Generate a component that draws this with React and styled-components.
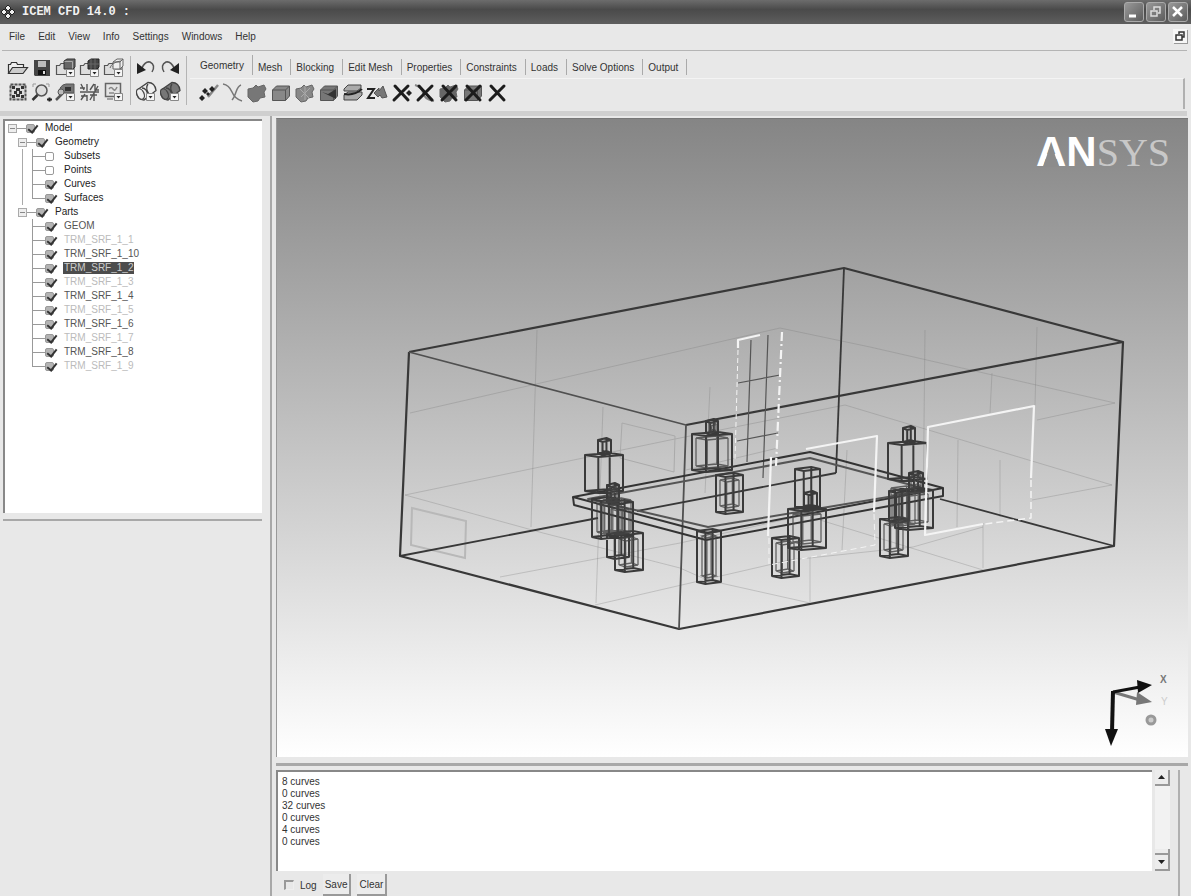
import { useState } from "react";
import styled, { createGlobalStyle } from "styled-components";

const GlobalStyle = createGlobalStyle`
  * {
    box-sizing: border-box;
  }
  body {
    margin: 0;
    background: #e8e8e8;
    color: #333;
    font-family: "Liberation Sans", Arial, sans-serif;
    font-size: 10px;
  }
  button, textarea {
    font: inherit;
    color: inherit;
  }
`;

const Window = styled.div`
  display: flex;
  flex-direction: column;
  height: 100vh;
  overflow: hidden;
`;

const TitleBar = styled.header`
  display: flex;
  align-items: center;
  gap: 7px;
  height: 24px;
  padding: 0 3px 0 1px;
  background: linear-gradient(#6c6c6c, #4a4a4a 40%, #5e5e5e);
`;

const Title = styled.h1`
  flex: 1;
  margin: 0;
  color: #f2f2f2;
  font-family: "Liberation Mono", monospace;
  font-size: 12px;
  font-weight: bold;
`;

const WindowButtons = styled.div`
  display: flex;
  gap: 2px;
`;

const WindowButton = styled.button`
  display: flex;
  width: 20px;
  height: 20px;
  padding: 0;
  border: 1px solid #aaa;
  border-radius: 3px;
  background: linear-gradient(135deg, #999, #5c5c5c);
`;

const MenuBar = styled.nav`
  display: flex;
  align-items: center;
  gap: 13px;
  height: 27px;
  margin: 0 4px 0 2px;
  padding: 0 0 2px 7px;
  border-bottom: 1px solid #b4b4b4;
`;

const MenuItem = styled.button`
  padding: 0;
  border: 0;
  background: none;
`;

const RestoreButton = styled.button`
  display: flex;
  width: 14px;
  height: 14px;
  margin-left: auto;
  padding: 0;
  border: 0;
  background: #f6f6f6;
  box-shadow: 1px 1px 0 #999;
`;

const ToolBar = styled.section`
  display: flex;
  height: 65px;
  margin-right: 4px;
  padding: 5px 2px 0 6px;
  border-bottom: 5px solid #cfcfcf;
`;

const ToolGroup = styled.div`
  display: grid;
  grid-template-columns: repeat(${(props) => props.$columns}, 24px);
  grid-auto-rows: 24px;
  height: 49px;
  padding-right: ${(props) => props.$gapAfter}px;
  margin-right: 3px;
  border-right: 1px solid #b4b4b4;
`;

const ToolButton = styled.button`
  display: flex;
  width: 24px;
  height: 24px;
  padding: 0;
  border: 0;
  background: none;
`;

const Ribbon = styled.div`
  flex: 1;
  display: flex;
  flex-direction: column;
`;

const TabList = styled.div`
  display: flex;
  align-items: flex-end;
  height: 22px;
  padding: 0 0 3px 5px;
`;

const Tab = styled.button`
  height: ${(props) => (props.$active ? 20 : 16)}px;
  padding: 0 8px 0 5px;
  border: 0;
  border-right: 1px solid #aaa;
  background: none;
  text-align: left;
  white-space: nowrap;
`;

const TabPanel = styled.div`
  display: flex;
  height: 31px;
  padding: 2px 0 0 7px;
  border-top: 1px solid #f4f4f4;
  border-right: 2px solid #b0b0b0;
`;

const Workspace = styled.main`
  flex: 1;
  display: flex;
  min-height: 0;
`;

const Sidebar = styled.aside`
  flex: 0 0 264px;
  display: flex;
  flex-direction: column;
  padding: 3px 2px 0 3px;
`;

const TreePane = styled.div`
  flex: 21;
  padding-bottom: 6px;
  border-bottom: 2px solid #a8a8a8;
`;

const DisplayPane = styled.div`
  flex: 20;
`;

const Tree = styled.ul`
  height: 100%;
  margin: 0;
  padding: 0 0 0 3px;
  border-top: 2px solid #888;
  border-left: 2px solid #888;
  background: #fff;
  list-style: none;
`;

const Branches = styled.ul`
  margin: 0;
  padding: 0 0 0 ${(props) => props.$indent}px;
  list-style: none;
  background: ${(props) =>
    props.$piped
      ? "linear-gradient(#aaa, #aaa) 4px 0 / 1px 100% no-repeat"
      : "none"};
`;

const Row = styled.div`
  display: flex;
  align-items: center;
  height: 14px;
`;

const Expander = styled.button`
  display: flex;
  width: 9px;
  height: 9px;
  padding: 0;
  border: 1px solid #aaa;
  background: #eee;

  &::before {
    content: "";
    width: 5px;
    height: 1px;
    margin: auto;
    background: #888;
  }
`;

const Link = styled.span`
  width: ${(props) => (props.$leaf ? 13 : 9)}px;
  height: 14px;
  background:
    linear-gradient(#999, #999) 0 0 / 1px
      ${(props) => (props.$leaf ? (props.$last ? "50%" : "100%") : "0")}
      no-repeat,
    linear-gradient(#999, #999) 0 50% / 100% 1px no-repeat;
`;

const Check = styled.input`
  appearance: none;
  width: 9px;
  height: 9px;
  margin: 0;
  border: 1px solid #999;
  border-radius: 2px;
  background: #fff;

  &:checked {
    background: #b4b4b4;
  }

  &:checked::before {
    content: "";
    display: block;
    width: 4px;
    height: 8px;
    margin: -2px 0 0 3px;
    border-right: 2px solid #333;
    border-bottom: 2px solid #333;
    transform: rotate(38deg);
  }
`;

const Label = styled.label`
  height: 12px;
  margin-left: 9px;
  padding: 0 1px;
  line-height: 12px;
  color: ${(props) => props.$color};
  background: ${(props) => (props.$selected ? "#4c4c4c" : "none")};
`;

const Splitter = styled.div`
  flex: 0 0 8px;
  margin-right: 4px;
  border-right: 2px solid #a8a8a8;
`;

const Main = styled.div`
  flex: 1;
  display: flex;
  flex-direction: column;
  min-width: 0;
  padding: 2px 3px 0 0;
`;

const Viewport = styled.section`
  flex: 1;
  min-height: 0;
  border-top: 1px solid #777;
  border-left: 1px solid #999;
  background: linear-gradient(#858585, #fff);
`;

const Scene = styled.svg`
  display: block;
  width: 100%;
  height: 100%;
`;

const Messages = styled.section`
  display: flex;
  flex-direction: column;
  margin-top: 6px;
  padding-top: 4px;
  border-top: 3px solid #a8a8a8;
  background: #e8e8e8;
`;

const Output = styled.div`
  display: flex;
  gap: 3px;
  padding-right: 8px;
`;

const Log = styled.textarea`
  flex: 1;
  height: 101px;
  padding: 4px;
  border: 0;
  border-top: 2px solid #888;
  border-left: 2px solid #888;
  outline: 0;
  background: #fff;
  line-height: 12px;
  resize: none;
  overflow: hidden;
`;

const ScrollBar = styled.div`
  display: flex;
  flex-direction: column;
  justify-content: space-between;
  width: 15px;
  background: #f2f2f2;
`;

const ScrollButton = styled.button`
  display: flex;
  width: 15px;
  height: ${(props) => (props.$thumb ? 22 : 16)}px;
  padding: 0;
  border: 0;
  border-right: 2px solid #999;
  border-bottom: 2px solid #999;
  background: ${(props) =>
    props.$thumb
      ? "linear-gradient(#999, #999) 0 4px / 100% 2px no-repeat #ececec"
      : "#ececec"};
`;

const LogBar = styled.div`
  display: flex;
  align-items: center;
  gap: 6px;
  height: 25px;
  padding: 3px 0 0 8px;
`;

const LogCheck = styled.input`
  appearance: none;
  width: 10px;
  height: 10px;
  margin: 0;
  border: 1px solid #eee;
  border-top: 2px solid #999;
  border-left: 2px solid #999;
`;

const LogButton = styled.button`
  height: 22px;
  padding: 0 2px;
  border: 0;
  border-right: 2px solid #999;
  border-bottom: 2px solid #999;
  background: #ececec;
`;

const MessagePanel = styled.div`
  border-right: 2px solid #b0b0b0;
  margin-right: 8px;
`;

const Drop = () => (
  <g>
    <path d="M12.500 13.500h8v7h-8z" fill="#f6f6f6" stroke="#888" />
    <path d="M14.500 16h4l-2 2.500z" fill="#222" />
  </g>
);

const Cube = ({ fill = "#888" }) => (
  <g stroke="#555" strokeLinejoin="round">
    <path d="M3.500 9l4-4h13v10l-4 4.500h-13z" fill={fill} />
    <path d="M3.500 9h13l4-4M16.500 9v10.500" fill="none" />
  </g>
);

const FolderBack = () => (
  <path
    d="M2.500 18.500v-9h3l1.500-2h4v3h9v8z"
    fill="#ddd"
    stroke="#555"
    strokeWidth="1.200"
  />
);

const Cross = () => (
  <g stroke="#1c1c1c" strokeWidth="3" strokeLinecap="round">
    <path d="M6 5l13 14M19 5l-14 14" />
  </g>
);

const Blob = ({ fill = "#777" }) => (
  <path
    d="M3 8l5-1 3-3 2 2 6-2 2 4-2 3 1 5-5 1-2 3-5 1-3-3-2-2z"
    fill={fill}
    stroke="#666"
  />
);

const Barrel = ({ fill }) => (
  <g stroke="#444" strokeWidth="1.300" fill={fill}>
    <path d="M3 10L14 2.500q7 0 8 8L10 20q-8 0-7-10z" />
    <ellipse cx="6.500" cy="14" rx="3.500" ry="5.500" transform="rotate(-25 6.500 14)" />
    <path d="M8 8q5 0 6 8M14 4q-3 4 1 10" fill="none" />
  </g>
);

const icons = {
  open: (
    <g stroke="#333" strokeWidth="1.200">
      <path d="M2.500 17.500v-9h2l1-2h5l1 2h6v3" fill="#eee" />
      <path d="M2.500 17.500l4-6h15l-4.500 6z" fill="#ccc" />
    </g>
  ),
  save: (
    <g>
      <path d="M4 4h16v16H5l-1-1z" fill="#444" />
      <path d="M8 5h8v6H8z" fill="#bbb" />
      <path d="M8 14h8v5H8z" fill="#111" />
      <path d="M13 15h2v3h-2z" fill="#ddd" />
    </g>
  ),
  openGeometry: (
    <g>
      <FolderBack />
      <path d="M10 5l3-2h8v8l-2 2h-9z" fill="#666" stroke="#333" />
      <path d="M10.500 5.500h8v7" fill="none" stroke="#aaa" />
      <Drop />
    </g>
  ),
  openMesh: (
    <g>
      <FolderBack />
      <path d="M10 5l3-2h8v8l-2 2h-9z" fill="#444" stroke="#222" />
      <path d="M13 3v10M17 3v10M10 8h11" stroke="#666" />
      <Drop />
    </g>
  ),
  openBlocking: (
    <g>
      <FolderBack />
      <path
        d="M11 6l4-3h6v7l-3 3h-7zM11 6h7l3-3M18 6v7M8 12q2-6 11-7"
        fill="#eee"
        stroke="#666"
      />
      <Drop />
    </g>
  ),
  fit: (
    <g>
      <path d="M4.500 4.500h15v15h-15z" fill="#ddd" stroke="#555" strokeWidth="2" strokeDasharray="3 1" />
      <path d="M6 6h3v3H6zM15 6h3v3h-3zM6 15h3v3H6zM15 15h3v3h-3zM10 8h4v3h-4zM8 11h3v3H8zM13 11h3v3h-3zM10 14h4v3h-4z" fill="#333" />
    </g>
  ),
  zoom: (
    <g fill="none" stroke="#555">
      <path d="M3 7V4h3M16 4h3v3" stroke="#999" />
      <circle cx="11.500" cy="10.500" r="5.500" fill="#ddd" strokeWidth="1.500" />
      <path d="M7.500 15l-5 5" stroke="#333" strokeWidth="2.500" />
      <path d="M17 19.500h5M19.500 17.500v4" stroke="#222" strokeWidth="2" />
    </g>
  ),
  measure: (
    <g>
      <path d="M5 14q0-9 7-10h8v9H9z" fill="#777" stroke="#555" />
      <path d="M11 7h6v4h-6z" fill="#333" />
      <path d="M8 14l-6 6" stroke="#555" strokeWidth="2.500" />
      <circle cx="7" cy="12" r="3" fill="#bbb" stroke="#555" />
      <Drop />
    </g>
  ),
  local: (
    <g fill="none" stroke="#555" strokeWidth="1.400">
      <path d="M2 8h5M9 4v7M3 4l3 6M12 10l4-6M2 12h19M17 4v6h4M3 20l4-6M9 15v6M12 15h7M16 13v8M20 6l-8 14M3 16h6" />
    </g>
  ),
  refresh: (
    <g>
      <path d="M3.500 3.500h15v13h-15z" fill="#e4e4e4" stroke="#666" strokeWidth="1.500" />
      <path d="M7 13h5M7 9q2-3 4 0t4-2M5 19h6" fill="none" stroke="#888" strokeWidth="1.500" />
      <Drop />
    </g>
  ),
  undo: (
    <g>
      <path d="M8 12q3-7 8-6 6 3 2 10" fill="none" stroke="#555" strokeWidth="1.500" />
      <path d="M3 7l0 11 9-4z" fill="#222" />
    </g>
  ),
  redo: (
    <g>
      <path d="M16 12q-3-7-8-6-6 3-2 10" fill="none" stroke="#555" strokeWidth="1.500" />
      <path d="M21 7l0 11-9-4z" fill="#222" />
    </g>
  ),
  wire: (
    <g>
      <Barrel fill="#eee" />
      <Drop />
    </g>
  ),
  solid: (
    <g>
      <Barrel fill="#777" />
      <Drop />
    </g>
  ),
  point: (
    <g fill="#222">
      <path d="M11 16L21 4" stroke="#888" strokeWidth="2.500" />
      <path d="M2 17l3-3 3 3-3 3zM5 10l3-3 3 3-3 3zM12 8l3-3 3 3-3 3zM9 13l2-2 2 2-2 2z" />
    </g>
  ),
  curve: (
    <g fill="none" stroke="#777" strokeWidth="1.500">
      <path d="M2 3q6 1 9 8t10 9M20 4q-3 1-5 7t-4 8" />
    </g>
  ),
  surface: <Blob />,
  body: <Cube />,
  faceted: (
    <g>
      <Blob fill="#888" />
      <path d="M7 8l9 9M17 7l-9 9M12 5v14" stroke="#aaa" />
    </g>
  ),
  repair: (
    <g>
      <Cube fill="#777" />
      <path d="M5 11l14 7V8l-8 5z" fill="#333" />
    </g>
  ),
  transform: (
    <g>
      <path d="M3 8l4-4h13v3l-4 3H3zM3 14l4-3h14v3l-5 5H3z" fill="#aaa" stroke="#444" />
      <path d="M3 13q10 2 18-5" fill="none" stroke="#222" strokeWidth="2" />
    </g>
  ),
  restore: (
    <g>
      <path d="M2 8h7l-6 9h7" fill="none" stroke="#222" strokeWidth="2" />
      <path d="M9 12l5-5v3l4-5 4 11-5 1-2-3-2 2z" fill="#777" stroke="#555" />
    </g>
  ),
  deletePoint: (
    <g>
      <Cross />
      <path d="M17 12l3-3 3 3-3 3z" fill="#222" />
    </g>
  ),
  deleteCurve: (
    <g>
      <path d="M2 4q7 2 8 8t11 8" fill="none" stroke="#888" strokeWidth="2" />
      <Cross />
    </g>
  ),
  deleteSurface: (
    <g>
      <Blob fill="#666" />
      <Cross />
    </g>
  ),
  deleteBody: (
    <g>
      <Cube fill="#777" />
      <Cross />
    </g>
  ),
  deleteAny: <Cross />,
};

const Icon = ({ name }) => (
  <svg width="24" height="24" viewBox="0 0 24 24" fill="none" aria-hidden="true">
    {icons[name]}
  </svg>
);

const fileTools = [
  ["open", "Open project"],
  ["save", "Save project"],
  ["openGeometry", "Open geometry"],
  ["openMesh", "Open mesh"],
  ["openBlocking", "Open blocking"],
  ["fit", "Fit window"],
  ["zoom", "Box zoom"],
  ["measure", "Measure distance"],
  ["local", "Local coordinate system"],
  ["refresh", "Refresh"],
];

const editTools = [
  ["undo", "Undo"],
  ["redo", "Redo"],
  ["wire", "Wire frame"],
  ["solid", "Solid display"],
];

const geometryTools = [
  ["point", "Create point"],
  ["curve", "Create curve"],
  ["surface", "Create surface"],
  ["body", "Create body"],
  ["faceted", "Create faceted"],
  ["repair", "Repair geometry"],
  ["transform", "Transform geometry"],
  ["restore", "Restore dormant"],
  ["deletePoint", "Delete point"],
  ["deleteCurve", "Delete curve"],
  ["deleteSurface", "Delete surface"],
  ["deleteBody", "Delete body"],
  ["deleteAny", "Delete any"],
];

const tabs = [
  "Geometry",
  "Mesh",
  "Blocking",
  "Edit Mesh",
  "Properties",
  "Constraints",
  "Loads",
  "Solve Options",
  "Output",
];

const menus = ["File", "Edit", "View", "Info", "Settings", "Windows", "Help"];

const groups = [
  {
    name: "Geometry",
    items: [
      { name: "Subsets", off: true },
      { name: "Points", off: true },
      { name: "Curves" },
      { name: "Surfaces" },
    ],
  },
  {
    name: "Parts",
    items: [
      { name: "GEOM", color: "#555" },
      { name: "TRM_SRF_1_1", color: "#bbb" },
      { name: "TRM_SRF_1_10", color: "#555" },
      { name: "TRM_SRF_1_2", color: "#ccc" },
      { name: "TRM_SRF_1_3", color: "#bbb" },
      { name: "TRM_SRF_1_4", color: "#555" },
      { name: "TRM_SRF_1_5", color: "#bbb" },
      { name: "TRM_SRF_1_6", color: "#555" },
      { name: "TRM_SRF_1_7", color: "#bbb" },
      { name: "TRM_SRF_1_8", color: "#555" },
      { name: "TRM_SRF_1_9", color: "#bbb" },
    ],
  },
];

const log = "8 curves\n0 curves\n32 curves\n0 curves\n4 curves\n0 curves";

const Tools = ({ tools }) =>
  tools.map(([name, label]) => (
    <ToolButton key={name} aria-label={label}>
      <Icon name={name} />
    </ToolButton>
  ));

const ModelTree = () => {
  const [selected, setSelected] = useState("TRM_SRF_1_2");
  return (
    <Tree>
      <li>
        <Row>
          <Expander aria-label="Collapse Model" />
          <Link />
          <Check type="checkbox" id="Model" defaultChecked />
          <Label htmlFor="Model" $color="#222">
            Model
          </Label>
        </Row>
        <Branches $indent={10}>
          {groups.map((group, g) => (
            <li key={group.name}>
              <Row>
                <Expander aria-label={`Collapse ${group.name}`} />
                <Link />
                <Check type="checkbox" id={group.name} defaultChecked />
                <Label htmlFor={group.name} $color="#222">
                  {group.name}
                </Label>
              </Row>
              <Branches $indent={14} $piped={g < groups.length - 1}>
                {group.items.map((item, i) => (
                  <li key={item.name}>
                    <Row>
                      <Link $leaf $last={i === group.items.length - 1} />
                      <Check
                        type="checkbox"
                        id={item.name}
                        defaultChecked={!item.off}
                      />
                      <Label
                        htmlFor={item.name}
                        $color={item.color || "#222"}
                        $selected={selected === item.name}
                        onClick={() => setSelected(item.name)}
                      >
                        {item.name}
                      </Label>
                    </Row>
                  </li>
                ))}
              </Branches>
            </li>
          ))}
        </Branches>
      </li>
    </Tree>
  );
};

// wire box seen from slightly above: two rims and four uprights
const prism = (x, y, w, h) => {
  const d = 2;
  const rim = (t) =>
    `M${x} ${t + d}L${x + w * 0.35} ${t + 2 * d}L${x + w} ${t + d}L${
      x + w * 0.65
    } ${t}Z`;
  const low = y + h - 2 * d;
  return `${rim(y)}${rim(low)}M${x} ${y + d}V${low + d}M${x + w} ${
    y + d
  }V${low + d}M${x + w * 0.35} ${y + 2 * d}V${low + 2 * d}M${
    x + w * 0.65
  } ${y}V${low}`;
};

const prisms = [
  [598, 438, 13, 17],
  [585, 453, 38, 40],
  [607, 483, 12, 21],
  [592, 497, 26, 42],
  [609, 500, 24, 38],
  [607, 532, 22, 27],
  [615, 531, 28, 41],
  [706, 419, 12, 16],
  [692, 432, 40, 40],
  [716, 473, 27, 41],
  [697, 529, 24, 55],
  [795, 467, 25, 42],
  [804, 491, 13, 20],
  [788, 507, 38, 43],
  [772, 536, 27, 42],
  [903, 426, 12, 18],
  [888, 441, 39, 40],
  [909, 471, 14, 20],
  [895, 488, 38, 42],
  [889, 489, 20, 34],
  [880, 517, 28, 41],
];

const dense = [
  [609, 486, 8, 16],
  [597, 502, 22, 32],
  [611, 507, 18, 28],
  [603, 498, 28, 36],
  [619, 537, 19, 30],
  [696, 436, 32, 32],
  [709, 422, 7, 11],
  [720, 478, 19, 30],
  [702, 534, 14, 44],
  [776, 541, 18, 32],
  [793, 512, 28, 32],
  [911, 474, 10, 14],
  [893, 493, 15, 28],
  [900, 492, 28, 32],
  [891, 486, 24, 40],
  [884, 522, 19, 30],
];

const draw = (list) => list.map((box) => prism(...box)).join("");

const Model = () => (
  <Scene
    viewBox="277 119 911 638"
    fill="none"
    role="img"
    aria-label="Wire frame model"
  >
    <path
      stroke="#777"
      strokeOpacity="0.3"
      d="M537 330L531 527M410 413L780 328L870 347L1115 403L1037 420M405 495L670 440L845 405L1112 485L1032 500M405 495L543 533L680 568L707 580L810 603M603 407L596 603M500 577L680 543L850 505M595 605L790 560L913 547L983 527M710 387L705 493M925 330L923 520M1037 327L1035 405M992 373L990 413M958 440L957 527M1000 460V517M983 523V568M810 558V602M847 450L842 550M820 520L983 570M686 470L778 448"
    />
    <path stroke="#b8b8b8" strokeWidth="2" d="M412 508L466 521L465 558L411 545Z" />
    <path stroke="#aaa" d="M622 423L675 436L674 472L620 458Z" />

    <g stroke="#383838" strokeWidth="2.200" strokeLinejoin="round">
      <path d="M409 352L844 268L1123 342L686 425" />
      <path d="M409 352L400 556L679 629L1114 546L1123 342" />
      <path strokeWidth="1.800" stroke="#505050" d="M409 352L686 425L679 629" />
      <path strokeWidth="1.800" d="M844 268L836 473" />
      <path strokeWidth="1.800" d="M400 556L598 518M637 511L836 473M940 499L1114 546" />
    </g>

    <path
      stroke="#555"
      strokeWidth="1.200"
      d="M751 340L747 462M768 335L763 478M738 383L780 375M737 441L778 433"
    />

    <g stroke="#333" strokeWidth="2" strokeLinejoin="round">
      <path d="M573 497L810 452L943 488L708 533Z" />
      <path stroke="#555" d="M588 499L810 458L930 490L708 527Z" />
      <path d="M573 497L574 505L706 540L943 496V488" />
    </g>

    <path stroke="#3a3a3a" strokeWidth="2" strokeLinejoin="round" d={draw(prisms)} />
    <path stroke="#444" strokeOpacity="0.8" strokeWidth="1.300" d={draw(dense)} />

    <g stroke="#f4f4f4" strokeWidth="2.200" strokeLinejoin="round">
      <path d="M738 348V340L760 335" />
      <path d="M782 332L776 466" strokeDasharray="9 3 2 4" />
      <path d="M738 350L735 460" strokeWidth="1" strokeDasharray="5 3" />
      <path d="M771 457L768 536" />
      <path d="M806 449L877 436L874 512" />
      <path d="M769 538V565L875 545L874 514" strokeWidth="1" strokeDasharray="6 4" />
      <path d="M983 524L925 535L928 427L1034 406L1031 478" />
      <path d="M1031 480V518L985 524" strokeWidth="1.500" strokeDasharray="7 4" />
    </g>

    <g>
      <text
        x="1036"
        y="166"
        fill="#fff"
        fontFamily="Liberation Sans, Arial, sans-serif"
        fontSize="42"
        fontWeight="bold"
      >
        AN
        <tspan
          fill="#c8c8c8"
          fontFamily="Liberation Serif, serif"
          fontSize="40"
          fontWeight="normal"
        >
          SYS
        </tspan>
      </text>
      <path d="M1051 143L1043 167H1059Z" fill="#8c8c8c" />
    </g>

    <path d="M1113 692L1140 700" stroke="#777" strokeWidth="3" />
    <path d="M1137 692L1152 702L1136 705Z" fill="#777" />
    <path d="M1113 692L1140 687" stroke="#111" strokeWidth="3" />
    <path d="M1137 680L1152 685L1138 693Z" fill="#111" />
    <path d="M1113 691L1112 732" stroke="#111" strokeWidth="4" />
    <path d="M1105 729H1118L1111 746Z" fill="#111" />
    <circle cx="1151" cy="720" r="4" fill="#ccc" stroke="#999" strokeWidth="3" />
    <text x="1160" y="683" fill="#777" fontSize="10" fontWeight="bold">
      X
    </text>
    <text x="1161" y="705" fill="#ccc" fontSize="10">
      Y
    </text>
  </Scene>
);

const App = () => {
  const [tab, setTab] = useState("Geometry");
  return (
    <Window>
      <GlobalStyle />
      <TitleBar>
        <svg width="14" height="14" viewBox="0 0 14 14" aria-hidden="true">
          <path
            d="M7 0l3 3-3 3-3-3zM7 8l3 3-3 3-3-3zM3 4l3 3-3 3-3-3zM11 4l3 3-3 3-3-3z"
            fill="#eee"
            stroke="#222"
          />
        </svg>
        <Title>ICEM CFD 14.0 :</Title>
        <WindowButtons>
          <WindowButton aria-label="Minimize">
            <svg width="18" height="18" viewBox="0 0 18 18">
              <path d="M4 13h7" stroke="#fff" strokeWidth="3" />
            </svg>
          </WindowButton>
          <WindowButton aria-label="Restore">
            <svg width="18" height="18" viewBox="0 0 18 18" fill="none">
              <path d="M4 8h6v5H4zM7 7V4h6v6h-2" stroke="#ddd" strokeWidth="1.500" />
            </svg>
          </WindowButton>
          <WindowButton aria-label="Close">
            <svg width="18" height="18" viewBox="0 0 18 18">
              <path d="M4 4l9 9M13 4l-9 9" stroke="#fff" strokeWidth="2.500" />
            </svg>
          </WindowButton>
        </WindowButtons>
      </TitleBar>
      <MenuBar>
        {menus.map((menu) => (
          <MenuItem key={menu}>{menu}</MenuItem>
        ))}
        <RestoreButton aria-label="Restore view">
          <svg width="14" height="14" viewBox="0 0 14 14" fill="none">
            <path d="M3 6h6v5H3zM6 5V3h5v5H9" stroke="#333" strokeWidth="1.500" />
          </svg>
        </RestoreButton>
      </MenuBar>
      <ToolBar>
        <ToolGroup $columns={5} $gapAfter={4}>
          <Tools tools={fileTools} />
        </ToolGroup>
        <ToolGroup $columns={2} $gapAfter={4}>
          <Tools tools={editTools} />
        </ToolGroup>
        <Ribbon>
          <TabList role="tablist">
            {tabs.map((name) => (
              <Tab
                key={name}
                role="tab"
                aria-selected={tab === name}
                $active={tab === name}
                onClick={() => setTab(name)}
              >
                {name}
              </Tab>
            ))}
          </TabList>
          <TabPanel role="tabpanel">
            <Tools tools={geometryTools} />
          </TabPanel>
        </Ribbon>
      </ToolBar>
      <Workspace>
        <Sidebar>
          <TreePane>
            <ModelTree />
          </TreePane>
          <DisplayPane />
        </Sidebar>
        <Splitter />
        <Main>
          <Viewport>
            <Model />
          </Viewport>
          <Messages>
            <MessagePanel>
              <Output>
                <Log aria-label="Messages" readOnly defaultValue={log} />
                <ScrollBar>
                  <ScrollButton aria-label="Scroll up">
                    <svg width="13" height="13" viewBox="0 0 13 13">
                      <path d="M3 9h7L6.500 5z" fill="#222" />
                    </svg>
                  </ScrollButton>
                  <ScrollButton $thumb aria-label="Scroll down">
                    <svg width="13" height="20" viewBox="0 0 13 20">
                      <path d="M3 11h7l-3.500 4z" fill="#222" />
                    </svg>
                  </ScrollButton>
                </ScrollBar>
              </Output>
              <LogBar>
                <LogCheck type="checkbox" id="log" />
                <label htmlFor="log">Log</label>
                <LogButton>Save</LogButton>
                <LogButton>Clear</LogButton>
              </LogBar>
            </MessagePanel>
          </Messages>
        </Main>
      </Workspace>
    </Window>
  );
};

export default App;
